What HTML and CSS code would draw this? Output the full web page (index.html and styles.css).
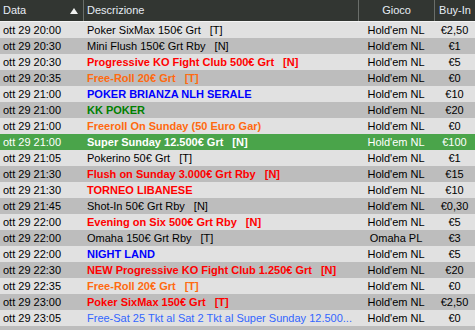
FILE: index.html
```html
<!DOCTYPE html>
<html lang="it">
<head>
<meta charset="utf-8">
<link rel="stylesheet" href="styles.css">
</head>
<body>
<div class="table">
  <div class="head">
    <div class="hc c-data">Data<span class="tri"></span></div>
    <div class="hc c-desc">Descrizione</div>
    <div class="hc c-game center">Gioco</div>
    <div class="hc c-buy center">Buy-In</div>
  </div>
  <div class="row light"><div class="c-data">ott 29 20:00</div><div class="c-desc">Poker SixMax 150€ Grt<span class="tag">[T]</span></div><div class="c-game center">Hold'em NL</div><div class="c-buy center">€2,50</div></div>
  <div class="row dark"><div class="c-data">ott 29 20:30</div><div class="c-desc">Mini Flush 150€ Grt Rby<span class="tag">[N]</span></div><div class="c-game center">Hold'em NL</div><div class="c-buy center">€1</div></div>
  <div class="row light"><div class="c-data">ott 29 20:30</div><div class="c-desc red">Progressive KO Fight Club 500€ Grt<span class="tag">[N]</span></div><div class="c-game center">Hold'em NL</div><div class="c-buy center">€5</div></div>
  <div class="row dark"><div class="c-data">ott 29 20:35</div><div class="c-desc orange">Free-Roll 20€ Grt<span class="tag">[T]</span></div><div class="c-game center">Hold'em NL</div><div class="c-buy center">€0</div></div>
  <div class="row light"><div class="c-data">ott 29 21:00</div><div class="c-desc blue">POKER BRIANZA NLH SERALE</div><div class="c-game center">Hold'em NL</div><div class="c-buy center">€10</div></div>
  <div class="row dark"><div class="c-data">ott 29 21:00</div><div class="c-desc green">KK POKER</div><div class="c-game center">Hold'em NL</div><div class="c-buy center">€20</div></div>
  <div class="row light"><div class="c-data">ott 29 21:00</div><div class="c-desc orange">Freeroll On Sunday (50 Euro Gar)</div><div class="c-game center">Hold'em NL</div><div class="c-buy center">€0</div></div>
  <div class="row sel"><div class="c-data">ott 29 21:00</div><div class="c-desc bold">Super Sunday 12.500€ Grt<span class="tag">[N]</span></div><div class="c-game center">Hold'em NL</div><div class="c-buy center">€100</div></div>
  <div class="row light"><div class="c-data">ott 29 21:05</div><div class="c-desc">Pokerino 50€ Grt<span class="tag">[T]</span></div><div class="c-game center">Hold'em NL</div><div class="c-buy center">€1</div></div>
  <div class="row dark"><div class="c-data">ott 29 21:30</div><div class="c-desc red">Flush on Sunday 3.000€ Grt Rby<span class="tag">[N]</span></div><div class="c-game center">Hold'em NL</div><div class="c-buy center">€15</div></div>
  <div class="row light"><div class="c-data">ott 29 21:30</div><div class="c-desc red">TORNEO LIBANESE</div><div class="c-game center">Hold'em NL</div><div class="c-buy center">€10</div></div>
  <div class="row dark"><div class="c-data">ott 29 21:45</div><div class="c-desc">Shot-In 50€ Grt Rby<span class="tag">[N]</span></div><div class="c-game center">Hold'em NL</div><div class="c-buy center">€0,30</div></div>
  <div class="row light"><div class="c-data">ott 29 22:00</div><div class="c-desc red">Evening on Six 500€ Grt Rby<span class="tag">[N]</span></div><div class="c-game center">Hold'em NL</div><div class="c-buy center">€5</div></div>
  <div class="row dark"><div class="c-data">ott 29 22:00</div><div class="c-desc">Omaha 150€ Grt Rby<span class="tag">[T]</span></div><div class="c-game center">Omaha PL</div><div class="c-buy center">€3</div></div>
  <div class="row light"><div class="c-data">ott 29 22:00</div><div class="c-desc blue">NIGHT LAND</div><div class="c-game center">Hold'em NL</div><div class="c-buy center">€5</div></div>
  <div class="row dark"><div class="c-data">ott 29 22:30</div><div class="c-desc red">NEW Progressive KO Fight Club 1.250€ Grt<span class="tag">[N]</span></div><div class="c-game center">Hold'em NL</div><div class="c-buy center">€20</div></div>
  <div class="row light"><div class="c-data">ott 29 22:35</div><div class="c-desc orange">Free-Roll 20€ Grt<span class="tag">[T]</span></div><div class="c-game center">Hold'em NL</div><div class="c-buy center">€0</div></div>
  <div class="row dark"><div class="c-data">ott 29 23:00</div><div class="c-desc red">Poker SixMax 150€ Grt<span class="tag">[T]</span></div><div class="c-game center">Hold'em NL</div><div class="c-buy center">€2,50</div></div>
  <div class="row light"><div class="c-data">ott 29 23:05</div><div class="c-desc lblue">Free-Sat 25 Tkt al Sat 2 Tkt al Super Sunday 12.500...</div><div class="c-game center">Hold'em NL</div><div class="c-buy center">€0</div></div>
  <div class="row dark"><div class="c-data">&nbsp;</div><div class="c-desc"></div><div class="c-game"></div><div class="c-buy"></div></div>
</div>
</body>
</html>
```
FILE: styles.css
```css
html, body {
  margin: 0;
  padding: 0;
  background: #e1e1e1;
  overflow: hidden;
}
body {
  font-family: "Liberation Sans", Arial, sans-serif;
  font-size: 11px;
  color: #000;
}
.table {
  width: 475px;
}
.head, .row {
  display: grid;
  grid-template-columns: 83px 275px 76px 41px;
}
.head {
  height: 21px;
  background: #323632;
  color: #e6ecf4;
  border-bottom: 1px solid #f4f4f4;
}
.hc {
  line-height: 21px;
  padding-left: 3px;
  border-left: 1px solid #6a6e6a;
  position: relative;
}
.hc.c-data {
  border-left: none;
}
.hc.c-desc {
  padding-left: 3px;
}
.hc.center {
  padding-left: 0;
  text-align: center;
}
.tri {
  position: absolute;
  right: 5px;
  top: 8px;
  width: 0;
  height: 0;
  border-left: 4px solid transparent;
  border-right: 4px solid transparent;
  border-bottom: 6px solid #f0f0f0;
}
.row {
  height: 16px;
  line-height: 16px;
}
.row > div {
  white-space: nowrap;
  overflow: hidden;
}
.row .c-data {
  padding-left: 3px;
}
.row .c-desc {
  padding-left: 4px;
}
.center {
  text-align: center;
}
.light { background: #e1e1e1; }
.dark { background: #bdbdbd; }
.sel { background: #4aa44a; color: #fff; }
.tag { margin-left: 9px; }
.bold { font-weight: bold; }
.red { color: #ff0000; font-weight: bold; }
.orange { color: #ff6a10; font-weight: bold; }
.blue { color: #0000ff; font-weight: bold; }
.green { color: #008000; font-weight: bold; }
.lblue { color: #3366ff; }
```
